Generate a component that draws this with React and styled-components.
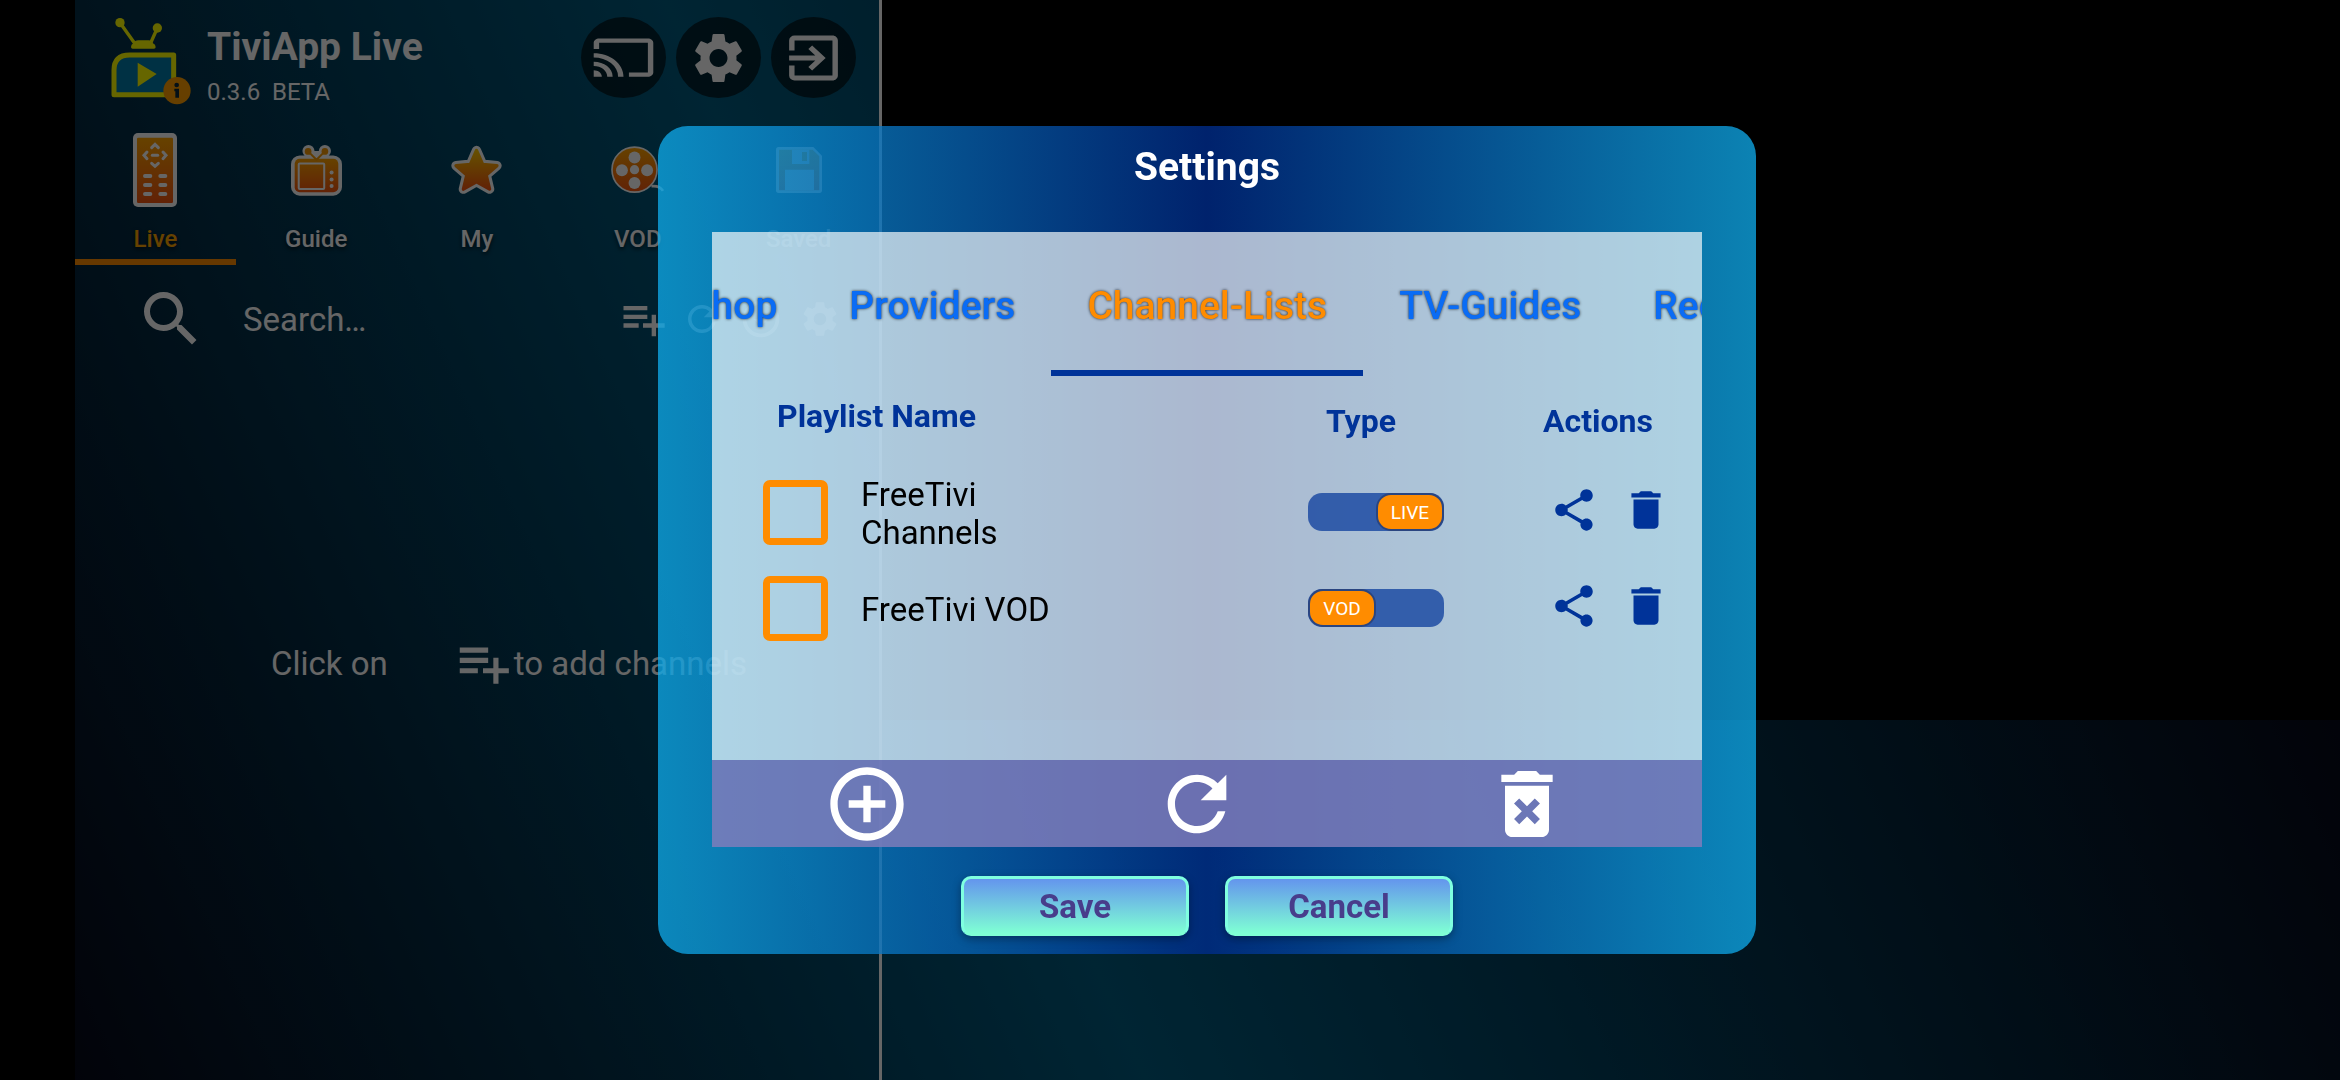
import React, { useLayoutEffect, useRef, useState } from "react";
import styled, { createGlobalStyle } from "styled-components";
import {
  MdAddCircleOutline,
  MdCast,
  MdDelete,
  MdDeleteForever,
  MdExitToApp,
  MdOutlineArrowCircleDown,
  MdPlaylistAdd,
  MdRefresh,
  MdSearch,
  MdSettings,
  MdShare,
} from "react-icons/md";

const GlobalStyle = createGlobalStyle`
  :root {
    --navy: #003399;
    --blue: #0a6cf5;
    --orange: #ff8c00;
  }
  * {
    box-sizing: border-box;
  }
  body {
    margin: 0;
    background: #000;
    font-family: Roboto, "Liberation Sans", sans-serif;
    overflow: hidden;
  }
  button {
    border: 0;
    padding: 0;
    background: none;
    font-family: inherit;
    color: inherit;
    cursor: pointer;
  }
  svg {
    display: block;
    flex: none;
  }
`;

const Screen = styled.div`
  min-height: 100vh;
  padding-left: 75px;
  background: #000;
`;
const Stage = styled.div`
  display: grid;
  grid-template-columns: minmax(0, 807fr) minmax(0, 1458fr);
  min-height: 100vh;
  background: linear-gradient(
    66deg,
    #060919 0%,
    #005c80 39%,
    #060919 88%
  );
`;
const Sidebar = styled.aside`
  border-right: 3px solid #fff;
  color: #fff;
`;
const Preview = styled.main`
  display: grid;
  grid-template-rows: 2fr 1fr;
`;
const Video = styled.div`
  background: #000;
`;

const Header = styled.header`
  display: flex;
  align-items: flex-start;
  height: 106px;
  padding: 17px 23px 0 36px;
`;
const Brand = styled.div`
  flex: 1;
  padding: 7px 0 0 16px;
`;
const AppName = styled.h1`
  margin: 0 0 7px;
  font-size: 39px;
  line-height: 46px;
  font-weight: 700;
`;
const Version = styled.p`
  margin: 0;
  font-size: 24px;
  line-height: 30px;
  white-space: pre;
`;
const HeaderActions = styled.div`
  display: flex;
  gap: 10px;
`;
const RoundButton = styled.button`
  display: flex;
  align-items: center;
  justify-content: center;
  width: 85px;
  height: 81px;
  border-radius: 50%;
  background: rgba(0, 0, 0, 0.6);

  & svg {
    width: 65px;
    height: ${({ $iconHeight }) => $iconHeight}px;
  }
`;

const Nav = styled.nav`
  display: grid;
  grid-template-columns: repeat(5, 1fr);
`;
const NavItem = styled.button`
  display: flex;
  flex-direction: column;
  align-items: center;
  padding: 27px 0 6px;
  border-bottom: 6px solid
    ${({ $active }) => ($active ? "var(--orange)" : "transparent")};
  color: ${({ $active }) => ($active ? "#ffa500" : "#fff")};
  font-size: 24px;
  line-height: 28px;
  font-weight: 500;
  text-shadow: 0 2px 4px rgba(0, 0, 0, 0.7);
`;
const NavIcon = styled.span`
  display: flex;
  align-items: center;
  height: 74px;
  margin-bottom: 18px;
`;

const SearchRow = styled.div`
  display: flex;
  align-items: center;
  height: 108px;
  padding: 0 30px 0 60px;
`;
const SearchField = styled.input`
  flex: 1;
  min-width: 0;
  margin-left: 36px;
  padding: 2px 0 0;
  border: 0;
  outline: 0;
  background: none;
  color: #fff;
  font-family: inherit;
  font-size: 33px;
  line-height: 38px;

  &::placeholder {
    color: #fff;
    opacity: 1;
  }
`;
const SearchAction = styled.button`
  display: flex;
  align-items: center;
  justify-content: center;
  width: 59px;
  height: 60px;
`;
const EmptyHint = styled.p`
  display: flex;
  align-items: center;
  margin: 0;
  padding: 24vh 0 0 196px;
  font-size: 33px;
  line-height: 38px;
  white-space: nowrap;

  & svg {
    margin-left: 64px;
  }
`;
const HintText = styled.span`
  padding-top: 2px;
`;

const Overlay = styled.div`
  position: fixed;
  inset: 0;
  display: flex;
  align-items: center;
  justify-content: center;
  padding: 0 1px 0 75px;
  background: rgba(0, 0, 0, 0.6);
`;
const Dialog = styled.section`
  width: min(94%, 1098px);
  border-radius: 30px;
  background: linear-gradient(
    to right,
    rgba(15, 172, 236, 0.76),
    rgba(0, 45, 143, 0.76) 50%,
    rgba(15, 172, 236, 0.76)
  );
`;
const DialogTitle = styled.h2`
  margin: 0;
  padding: 18px 0 42px;
  color: #fff;
  font-size: 39px;
  line-height: 46px;
  font-weight: 700;
  text-align: center;
`;
const Panel = styled.div`
  margin: 0 54px;
  background: rgba(244, 248, 250, 0.7);
`;
const Tabs = styled.div`
  position: relative;
  display: flex;
  overflow: hidden;
`;
const Tab = styled.button`
  flex: none;
  height: 144px;
  padding: 10px 36px 0;
  border-bottom: 6px solid
    ${({ $active }) => ($active ? "var(--navy)" : "transparent")};
  color: ${({ $active }) => ($active ? "var(--orange)" : "var(--blue)")};
  font-size: 39px;
  line-height: 46px;
  font-weight: 500;
  text-shadow: 0 0 3px rgba(0, 0, 0, 0.8);
`;

const ListArea = styled.div`
  min-height: 384px;
`;
const Table = styled.table`
  width: 100%;
  table-layout: fixed;
  border-collapse: collapse;
`;
const HeadCell = styled.th`
  height: 88px;
  padding: ${({ $raised }) => ($raised ? "0 0 8px" : "2px 0 0")};
  padding-left: ${({ $indent }) => $indent}px;
  color: var(--navy);
  font-size: 32px;
  line-height: 38px;
  font-weight: 700;
  text-align: left;
`;
const Cell = styled.td`
  height: 96px;
  padding: 0 0 0 ${({ $indent = 0 }) => $indent}px;
  vertical-align: middle;
`;
const Check = styled.input`
  display: block;
  appearance: none;
  width: 65px;
  height: 65px;
  margin: 0;
  border: 7px solid var(--orange);
  border-radius: 7px;

  &:checked {
    background: var(--orange);
  }
`;
const ListName = styled.label`
  display: block;
  max-width: 210px;
  padding-top: 4px;
  font-size: 33px;
  line-height: 38px;
  color: #000;
`;
const Toggle = styled.label`
  position: relative;
  display: flex;
  justify-content: ${({ $on }) => ($on ? "flex-end" : "flex-start")};
  width: 136px;
  border-radius: 14px;
  background: rgba(0, 51, 153, 0.7);

  & input {
    position: absolute;
    inset: 0;
    width: 100%;
    height: 100%;
    margin: 0;
    opacity: 0;
    cursor: pointer;
  }
`;
const Thumb = styled.span`
  width: 68px;
  padding-top: 1px;
  border: 2px solid #2a4580;
  border-radius: 15px;
  background: var(--orange);
  color: #fff;
  font-size: 19px;
  line-height: 33px;
  text-align: center;
`;
const RowActions = styled.div`
  display: flex;
  gap: 22px;
  padding-bottom: 5px;
  color: var(--navy);
`;

const Toolbar = styled.div`
  display: grid;
  grid-template-columns: repeat(3, 1fr);
  background: rgba(44, 38, 144, 0.5);
  color: #fff;
`;
const ToolButton = styled.button`
  display: flex;
  justify-content: center;
  padding-right: 20px;
  height: 87px;
`;
const Footer = styled.footer`
  display: flex;
  justify-content: center;
  gap: 36px;
  padding: 29px 0 18px;
`;
const FooterButton = styled.button`
  width: 228px;
  height: 60px;
  padding-top: 2px;
  border: 3px solid #7fffe0;
  border-bottom-color: #7fffd4;
  border-radius: 10px;
  background: linear-gradient(#6495ed, #7fffd4);
  box-shadow: 0 3px 8px rgba(0, 0, 0, 0.35);
  color: #483d8b;
  font-size: 33px;
  line-height: 38px;
  font-weight: 700;
`;

function Logo() {
  return (
    <svg width="80" height="88" viewBox="0 0 240 264">
      <g fill="#ffff00" stroke="#ffff00">
        <circle cx="27" cy="17" r="14" stroke="none" />
        <circle cx="139" cy="33" r="14" stroke="none" />
        <path d="M27 17L72 80M139 33L119 78" strokeWidth="10" fill="none" />
        <path
          d="M60 90q0-8 7-11 4-9 15-9h31q10 0 13 9 8 3 8 11 0 5-5 5H65q-5 0-5-5z"
          stroke="none"
        />
        <path
          d="M9 233V160Q9 114 56 114H188V233Z"
          fill="#007aaa"
          strokeWidth="15"
          strokeLinejoin="round"
        />
        <path d="M80 137L137 171L80 209Z" stroke="none" />
      </g>
      <circle cx="198" cy="221" r="41" fill="#ff9d00" />
      <g fill="#0a2a3a">
        <circle cx="197" cy="204" r="7" />
        <path d="M190 215h14v27h-11v-19h-3z" />
      </g>
    </svg>
  );
}

function Warm({ id, from = "#ffa500" }) {
  return (
    <linearGradient id={id} x1="0" y1="0" x2="0" y2="1">
      <stop offset="0" stopColor={from} />
      <stop offset="1" stopColor="#f45510" />
    </linearGradient>
  );
}

function RemoteIcon() {
  return (
    <svg width="44" height="74" viewBox="0 0 132 222">
      <Warm id="remote" />
      <rect width="132" height="222" rx="15" fill="#fff" />
      <rect x="12" y="14" width="108" height="196" rx="4" fill="url(#remote)" />
      <g fill="none" stroke="#fff" strokeWidth="9" strokeLinecap="round">
        <path d="M56 44L66 34L76 44M42 57L33 67L42 77M90 57L99 67L90 77M56 91L66 100L76 91" />
        <path d="M58 67H74" />
        <path
          d="M36 129H52M82 129H97M36 156H52M82 156H97M36 183H52M82 183H97"
          strokeWidth="12"
        />
      </g>
    </svg>
  );
}

function TvIcon() {
  return (
    <svg width="51" height="51" viewBox="0 0 152 152">
      <Warm id="tv" />
      <g fill="#fff">
        <circle cx="52" cy="18" r="18" />
        <circle cx="101" cy="18" r="18" />
        <path d="M52 18L76 42L101 18" stroke="#fff" strokeWidth="20" />
        <rect y="31" width="152" height="120" rx="26" />
      </g>
      <rect x="11" y="41" width="130" height="100" rx="15" fill="url(#tv)" />
      <g fill="#f59a06">
        <circle cx="51" cy="19" r="10" />
        <circle cx="101" cy="19" r="10" />
      </g>
      <path
        d="M51 19L76 44L101 19"
        fill="none"
        stroke="#f59a06"
        strokeWidth="6"
      />
      <rect
        x="23"
        y="55"
        width="76"
        height="76"
        rx="3"
        fill="none"
        stroke="#fff"
        strokeWidth="6"
      />
      <g fill="#fff">
        <circle cx="121" cy="82" r="6" />
        <circle cx="121" cy="103" r="6" />
        <circle cx="121" cy="122" r="6" />
      </g>
    </svg>
  );
}

function StarIcon() {
  const points =
    "76,16 94,57 137,61 105,89 115,131 76,109 37,131 47,89 15,61 58,57";
  return (
    <svg width="51" height="50" viewBox="0 0 152 148">
      <Warm id="star" from="#ffc800" />
      <g strokeLinejoin="round">
        <polygon points={points} fill="#fff" stroke="#fff" strokeWidth="28" />
        <polygon
          points={points}
          fill="url(#star)"
          stroke="url(#star)"
          strokeWidth="10"
        />
      </g>
    </svg>
  );
}

function FilmIcon() {
  return (
    <svg width="53" height="48" viewBox="0 0 160 144">
      <Warm id="film" />
      <circle
        cx="71"
        cy="71"
        r="68"
        fill="url(#film)"
        stroke="#fff"
        strokeWidth="5"
      />
      <g fill="#fff">
        <circle cx="71" cy="71" r="14" />
        <circle cx="71" cy="34" r="18" />
        <circle cx="33" cy="73" r="18" />
        <circle cx="109" cy="73" r="18" />
        <circle cx="71" cy="111" r="18" />
      </g>
      <path
        d="M122 121Q146 118 157 135"
        fill="none"
        stroke="#fff"
        strokeWidth="8"
      />
    </svg>
  );
}

function SaveIcon() {
  return (
    <svg width="46" height="46" viewBox="0 0 138 138">
      <Warm id="save" />
      <path
        d="M8 0H112L138 26V130Q138 138 130 138H8Q0 138 0 130V8Q0 0 8 0Z"
        fill="#fff"
      />
      <path d="M9 8H110L130 28V130H9Z" fill="url(#save)" />
      <path d="M48 8H100V51H48ZM27 68H114V130H27Z" fill="#fff" />
      <path d="M78 15H93V42H78Z" fill="#f59a06" />
    </svg>
  );
}

const NAV_ITEMS = [
  { label: "Live", icon: <RemoteIcon /> },
  { label: "Guide", icon: <TvIcon /> },
  { label: "My", icon: <StarIcon /> },
  { label: "VOD", icon: <FilmIcon /> },
  { label: "Saved", icon: <SaveIcon /> },
];

const TABS = ["Shop", "Providers", "Channel-Lists", "TV-Guides", "Recordings"];

const PLAYLISTS = [
  { id: "channels", name: "FreeTivi Channels", live: true },
  { id: "vod", name: "FreeTivi VOD", live: false },
];

function SettingsTabs() {
  const [active, setActive] = useState("Channel-Lists");
  const listRef = useRef(null);
  const activeRef = useRef(null);

  // keep the active tab in the middle of the strip
  useLayoutEffect(() => {
    const list = listRef.current;
    const tab = activeRef.current;
    list.scrollLeft =
      tab.offsetLeft - (list.clientWidth - tab.offsetWidth) / 2;
  }, [active]);

  return (
    <Tabs role="tablist" ref={listRef}>
      {TABS.map((tab) => (
        <Tab
          key={tab}
          role="tab"
          aria-selected={tab === active}
          $active={tab === active}
          ref={tab === active ? activeRef : null}
          onClick={() => setActive(tab)}
        >
          {tab}
        </Tab>
      ))}
    </Tabs>
  );
}

function PlaylistRow({ id, name, live }) {
  const [on, setOn] = useState(live);

  return (
    <tr>
      <Cell $indent={51}>
        <Check type="checkbox" id={id} />
      </Cell>
      <Cell>
        <ListName htmlFor={id}>{name}</ListName>
      </Cell>
      <Cell>
        <Toggle $on={on}>
          <input
            type="checkbox"
            role="switch"
            checked={on}
            onChange={() => setOn(!on)}
          />
          <Thumb>{on ? "LIVE" : "VOD"}</Thumb>
        </Toggle>
      </Cell>
      <Cell $indent={6}>
        <RowActions>
          <button aria-label={`Share ${name}`}>
            <MdShare size={50} />
          </button>
          <button aria-label={`Delete ${name}`}>
            <MdDelete size={50} />
          </button>
        </RowActions>
      </Cell>
    </tr>
  );
}

export default function App() {
  return (
    <>
      <GlobalStyle />
      <Screen>
        <Stage>
          <Sidebar>
            <Header>
              <Logo />
              <Brand>
                <AppName>TiviApp Live</AppName>
                <Version>0.3.6{"  "}BETA</Version>
              </Brand>
              <HeaderActions>
                <RoundButton aria-label="Cast" $iconHeight={51}>
                  <MdCast preserveAspectRatio="none" />
                </RoundButton>
                <RoundButton aria-label="Settings" $iconHeight={60}>
                  <MdSettings />
                </RoundButton>
                <RoundButton aria-label="Exit" $iconHeight={60}>
                  <MdExitToApp preserveAspectRatio="none" />
                </RoundButton>
              </HeaderActions>
            </Header>
            <Nav>
              {NAV_ITEMS.map(({ label, icon }, index) => (
                <NavItem key={label} $active={index === 0}>
                  <NavIcon>{icon}</NavIcon>
                  {label}
                </NavItem>
              ))}
            </Nav>
            <SearchRow>
              <MdSearch size={72} />
              <SearchField aria-label="Search" placeholder="Search…" />
              <SearchAction aria-label="Add playlist">
                <MdPlaylistAdd size={52} />
              </SearchAction>
              <SearchAction aria-label="Refresh">
                <MdRefresh size={42} />
              </SearchAction>
              <SearchAction aria-label="Download">
                <MdOutlineArrowCircleDown size={44} />
              </SearchAction>
              <SearchAction aria-label="List settings">
                <MdSettings size={42} />
              </SearchAction>
            </SearchRow>
            <EmptyHint>
              <HintText>Click on</HintText>
              <MdPlaylistAdd size={62} />
              <HintText>to add channels</HintText>
            </EmptyHint>
          </Sidebar>
          <Preview>
            <Video />
          </Preview>
        </Stage>
      </Screen>
      <Overlay>
        <Dialog role="dialog" aria-labelledby="settings-title">
          <DialogTitle id="settings-title">Settings</DialogTitle>
          <Panel>
            <SettingsTabs />
            <ListArea>
              <Table>
                <colgroup>
                  <col width="149" />
                  <col />
                  <col width="235" />
                  <col width="159" />
                </colgroup>
                <thead>
                  <tr>
                    <HeadCell colSpan={2} $indent={65} $raised>
                      Playlist Name
                    </HeadCell>
                    <HeadCell $indent={18}>Type</HeadCell>
                    <HeadCell $indent={0}>Actions</HeadCell>
                  </tr>
                </thead>
                <tbody>
                  {PLAYLISTS.map((playlist) => (
                    <PlaylistRow key={playlist.id} {...playlist} />
                  ))}
                </tbody>
              </Table>
            </ListArea>
            <Toolbar>
              <ToolButton aria-label="Add list">
                <MdAddCircleOutline size={88} />
              </ToolButton>
              <ToolButton aria-label="Refresh lists">
                <MdRefresh size={88} />
              </ToolButton>
              <ToolButton aria-label="Delete all lists">
                <MdDeleteForever size={88} />
              </ToolButton>
            </Toolbar>
          </Panel>
          <Footer>
            <FooterButton>Save</FooterButton>
            <FooterButton>Cancel</FooterButton>
          </Footer>
        </Dialog>
      </Overlay>
    </>
  );
}
